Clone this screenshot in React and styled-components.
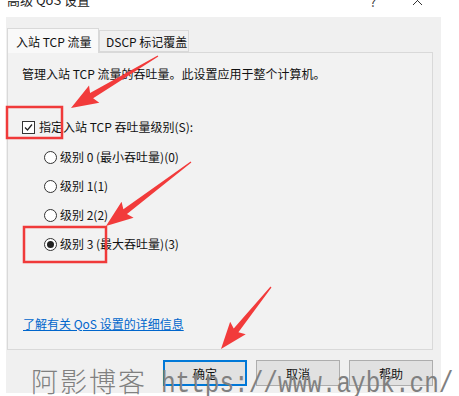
import React from "react"
import styled, { createGlobalStyle } from "styled-components"

const Global = createGlobalStyle`
  html, body {
    margin: 0;
    padding: 0;
    background: #ffffff;
  }
  body {
    font-family: "Noto Sans CJK SC", "Noto Sans", sans-serif;
    font-size: 12px;
    color: #111;
  }
`

const Page = styled.div`
  position: relative;
  width: 459px;
  height: 396px;
  overflow: hidden;
  background: #ffffff;
`
const TitleBar = styled.div`
  display: flex;
  align-items: flex-start;
  height: 17px;
  padding: 0 32px 0 7px;
  overflow: hidden;
`
const Title = styled.div`
  flex: 1;
  margin-top: -9px;
  font-size: 13px;
  line-height: 17px;
  color: #222;
`
const TitleButton = styled.div`
  width: 20px;
  margin-left: ${(p) => p.gap || 0}px;
  display: flex;
  justify-content: center;
  margin-top: -5px;
  font-size: 13px;
  line-height: 14px;
  color: #333;
`
const Window = styled.div`
  margin-left: 6px;
  width: 435px;
  height: 376px;
  background: #f0f0f0;
  padding: 11px 8px 0 1px;
  box-sizing: border-box;
  display: flex;
  flex-direction: column;
`
const Tabs = styled.div`
  display: flex;
  align-items: flex-end;
  height: 24px;
  position: relative;
  z-index: 1;
`
const Tab = styled.div`
  box-sizing: border-box;
  width: ${(p) => p.w}px;
  height: ${(p) => (p.active ? 25 : 22)}px;
  padding: 0 ${(p) => (p.active ? 8 : 6)}px;
  display: flex;
  align-items: center;
  background: ${(p) => (p.active ? "#f9f9f9" : "#f0f0f0")};
  border: 1px solid #d9d9d9;
  border-bottom: ${(p) => (p.active ? "none" : "1px solid #d9d9d9")};
  margin-bottom: ${(p) => (p.active ? -1 : 0)}px;
  font-size: 12px;
  color: #111;
  white-space: nowrap;
`
const Panel = styled.div`
  box-sizing: border-box;
  height: 298px;
  border: 1px solid #d9d9d9;
  background: #f2f2f2;
  padding: 13px 0 0 14px;
  display: flex;
  flex-direction: column;
`
const Description = styled.div`
  line-height: 16px;
`
const CheckRow = styled.label`
  display: flex;
  align-items: center;
  gap: 4px;
  margin-top: 37px;
  height: 16px;
  line-height: 16px;
`
const Box = styled.span`
  width: 11px;
  height: 11px;
  border: 1px solid #333;
  background: #fff;
  display: flex;
  align-items: center;
  justify-content: center;
`
const RadioGroup = styled.div`
  display: flex;
  flex-direction: column;
  gap: 13px;
  margin-top: 14px;
  padding-left: 22px;
`
const RadioRow = styled.label`
  display: flex;
  align-items: center;
  gap: 3px;
  height: 16px;
  line-height: 16px;
`
const Circle = styled.span`
  box-sizing: border-box;
  width: 13px;
  height: 13px;
  border-radius: 50%;
  border: 1px solid #333;
  background: #fff;
  display: flex;
  align-items: center;
  justify-content: center;
  &::after {
    content: "";
    width: 7px;
    height: 7px;
    border-radius: 50%;
    background: ${(p) => (p.checked ? "#222" : "transparent")};
  }
`
const Link = styled.a`
  margin-top: auto;
  margin-bottom: 17px;
  color: #0066cc;
  text-decoration: underline;
  line-height: 16px;
  padding-left: 1px;
`
const Footer = styled.div`
  display: flex;
  justify-content: flex-end;
  gap: 9px;
  margin-top: 10px;
`
const Button = styled.div`
  box-sizing: border-box;
  width: 84px;
  height: 26px;
  display: flex;
  align-items: center;
  justify-content: center;
  background: #e1e1e1;
  border: ${(p) => (p.primary ? "2px solid #0078d7" : "1px solid #adadad")};
  color: #111;
`
const Overlay = styled.svg`
  position: absolute;
  left: 0;
  top: 0;
  pointer-events: none;
`
const Watermark = styled.div`
  position: absolute;
  left: 31px;
  top: 361px;
  display: flex;
  align-items: baseline;
  white-space: nowrap;
  color: #808080;
  pointer-events: none;
`
const WatermarkCn = styled.span`
  font-family: "Noto Sans CJK SC", sans-serif;
  font-weight: 300;
  font-size: 27px;
  letter-spacing: 2px;
`
const WatermarkUrl = styled.span`
  display: inline-block;
  margin-left: 14px;
  font-family: "Liberation Mono", monospace;
  font-size: 29px;
  transform: scaleX(0.84);
  transform-origin: left;
`

function arrowPoints(x1, y1, x2, y2) {
  const dx = x2 - x1
  const dy = y2 - y1
  const len = Math.hypot(dx, dy)
  const ux = dx / len
  const uy = dy / len
  const nx = -uy
  const ny = ux
  const head = 24
  const bx = x2 - ux * head
  const by = y2 - uy * head
  const w0 = 0.6
  const w1 = 3
  const hw = 10
  const pts = [
    [x1 + nx * w0, y1 + ny * w0],
    [bx + nx * w1, by + ny * w1],
    [bx + nx * hw - ux * 3, by + ny * hw - uy * 3],
    [x2, y2],
    [bx - nx * hw - ux * 3, by - ny * hw - uy * 3],
    [bx - nx * w1, by - ny * w1],
    [x1 - nx * w0, y1 - ny * w0],
  ]
  return pts.map((p) => p.join(",")).join(" ")
}

const levels = [
  { label: "级别 0 (最小吞吐量)(0)" },
  { label: "级别 1(1)" },
  { label: "级别 2(2)" },
  { label: "级别 3 (最大吞吐量)(3)", checked: true },
]

export default function App() {
  return (
    <Page>
      <Global />
      <TitleBar>
        <Title>高级 QoS 设置</Title>
        <TitleButton>?</TitleButton>
        <TitleButton gap={24}>
          <svg width="11" height="11" viewBox="0 0 11 11" style={{ marginTop: 1 }}>
            <path d="M1 0 L10 9 M10 0 L1 9" stroke="#333" strokeWidth="1" />
          </svg>
        </TitleButton>
      </TitleBar>
      <Window>
        <Tabs>
          <Tab active w={92}>入站 TCP 流量</Tab>
          <Tab w={90}>DSCP 标记覆盖</Tab>
        </Tabs>
        <Panel>
          <Description>管理入站 TCP 流量的吞吐量。此设置应用于整个计算机。</Description>
          <CheckRow>
            <Box>
              <svg width="9" height="9" viewBox="0 0 9 9">
                <path d="M1 4.5 L3.5 7 L8 1.5" stroke="#222" strokeWidth="1.2" fill="none" />
              </svg>
            </Box>
            指定入站 TCP 吞吐量级别(S):
          </CheckRow>
          <RadioGroup>
            {levels.map((l) => (
              <RadioRow key={l.label}>
                <Circle checked={l.checked} />
                {l.label}
              </RadioRow>
            ))}
          </RadioGroup>
          <Link>了解有关 QoS 设置的详细信息</Link>
        </Panel>
        <Footer>
          <Button primary>确定</Button>
          <Button>取消</Button>
          <Button>帮助</Button>
        </Footer>
      </Window>

      <Overlay width="459" height="396">
        <rect x="7" y="107" width="55" height="31" fill="none" stroke="#f03a3a" strokeWidth="2.5" />
        <rect x="24" y="227" width="82" height="35" fill="none" stroke="#f03a3a" strokeWidth="2.5" />
        <polygon points={arrowPoints(158, 56, 71, 108)} fill="#f23b3b" />
        <polygon points={arrowPoints(191, 162, 106, 226)} fill="#f23b3b" />
        <polygon points={arrowPoints(271, 287, 221, 349)} fill="#f23b3b" />
      </Overlay>

      <Watermark>
        <WatermarkCn>阿影博客</WatermarkCn>
        <WatermarkUrl>https://www.aybk.cn/</WatermarkUrl>
      </Watermark>
    </Page>
  )
}
